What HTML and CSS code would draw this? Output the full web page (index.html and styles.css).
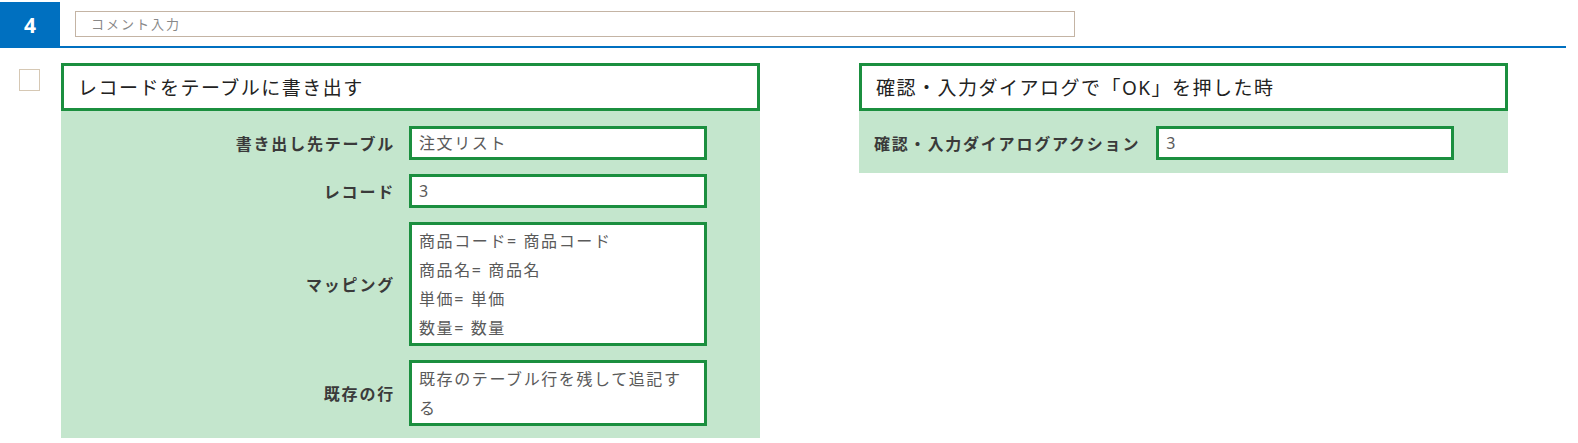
FILE: index.html
```html
<!DOCTYPE html>
<html lang="ja">
<head>
<meta charset="UTF-8">
<meta name="viewport" content="width=device-width, initial-scale=1.0">
<title>レコードをテーブルに書き出す</title>
<link rel="stylesheet" href="styles.css">
</head>
<body>

<div class="step-header">
  <div class="step-no">4</div>
  <input class="step-comment" type="text" placeholder="コメント入力">
</div>

<div class="step-body">
  <div class="step-check"></div>

  <div class="card card-left">
    <div class="card-title">レコードをテーブルに書き出す</div>
    <div class="card-body form-grid">
      <div class="field-label">書き出し先テーブル</div>
      <div class="field-box">注文リスト</div>

      <div class="field-label">レコード</div>
      <div class="field-box">3</div>

      <div class="field-label">マッピング</div>
      <div class="field-box multi">商品コード= 商品コード<br>商品名= 商品名<br>単価= 単価<br>数量= 数量</div>

      <div class="field-label">既存の行</div>
      <div class="field-box multi">既存のテーブル行を残して追記する</div>
    </div>
  </div>

  <div class="card card-right">
    <div class="card-title">確認・入力ダイアログで「OK」を押した時</div>
    <div class="card-body form-row">
      <div class="field-label">確認・入力ダイアログアクション</div>
      <div class="field-box">3</div>
    </div>
  </div>
</div>

</body>
</html>
```

FILE: styles.css
```css
body {
  margin: 0;
  padding-top: 2px;
  font-family: "Noto Sans", "Noto Sans CJK JP", sans-serif;
  color: #333;
  background: #fff;
}
.step-header {
  display: flex;
  align-items: center;
  width: 1566px;
  height: 44px;
  border-bottom: 2px solid #0070c0;
}
.step-no {
  flex: none;
  width: 60px;
  height: 46px;
  margin-bottom: -2px;
  background-color: #0070c0;
  color: #fff;
  font-size: 21px;
  font-weight: bold;
  display: flex;
  align-items: center;
  justify-content: center;
}
.step-comment {
  flex: none;
  box-sizing: border-box;
  width: 1000px;
  height: 26px;
  margin-left: 15px;
  padding: 0 15px;
  border: 1px solid #c4b4a4;
  font-family: inherit;
  font-size: 13px;
  letter-spacing: 2px;
  color: #555;
  outline: none;
}
.step-comment::placeholder {
  color: #888;
}
.step-body {
  display: flex;
  align-items: flex-start;
  padding-top: 15px;
}
.step-check {
  flex: none;
  box-sizing: border-box;
  width: 21px;
  height: 22px;
  margin: 6px 21px 0 19px;
  border: 1px solid #d6c8b4;
}
.card {
  flex: none;
  box-sizing: border-box;
}
.card-left {
  width: 699px;
}
.card-right {
  width: 649px;
  margin-left: 99px;
}
.card-title {
  box-sizing: border-box;
  height: 48px;
  padding: 0 14px;
  border: 3px solid #1b8f3f;
  background: #fff;
  color: #222;
  font-size: 19px;
  letter-spacing: 1.5px;
  display: flex;
  align-items: center;
}
.card-body {
  background-color: #c4e6cd;
}
.form-grid {
  display: grid;
  grid-template-columns: 334px 298px;
  column-gap: 14px;
  row-gap: 14px;
  padding: 15px 0 12px;
}
.form-row {
  display: flex;
  align-items: center;
  gap: 16px;
  padding: 15px 15px 13px;
}
.field-label {
  display: flex;
  align-items: center;
  justify-content: flex-end;
  font-size: 16px;
  letter-spacing: 1.8px;
  font-weight: bold;
  color: #3a3a3a;
}
.field-box {
  flex: none;
  box-sizing: border-box;
  width: 298px;
  min-height: 34px;
  padding: 0 7px;
  border: 3px solid #1b8f3f;
  background: #fff;
  font-size: 16px;
  letter-spacing: 1.6px;
  line-height: 28px;
  color: #5a5a5a;
}
.field-box.multi {
  line-height: 29px;
  padding-top: 2px;
}
```
